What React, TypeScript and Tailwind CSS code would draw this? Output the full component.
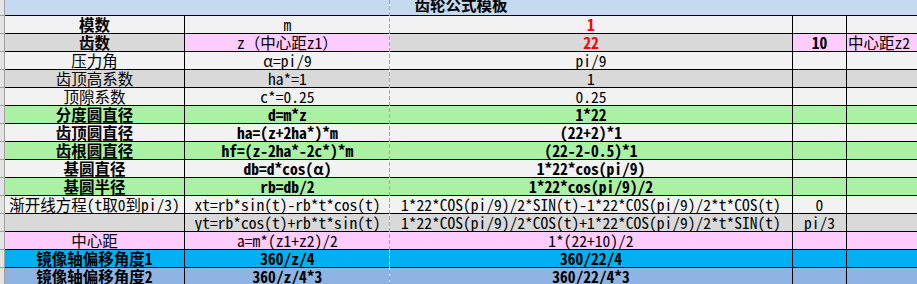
type Cell = { t: string; bg: string; b?: boolean; red?: boolean }

const G1 = "bg-[#f2f2f2]"
const G2 = "bg-[#d9d9d9]"
const PK = "bg-[#ffccff]"
const GR = "bg-[#aaf1a3]"
const BL = "bg-[#00b0f0]"
const LB = "bg-[#8db4e2]"

const c = (t: string, bg: string, b = false, red = false): Cell => ({ t, bg, b, red })

const rows: Cell[][] = [
  [c("模数", G1, true), c("m", G1), c("1", G1, true, true), c("", G1), c("", G1)],
  [c("齿数", G2, true), c("z（中心距z1）", PK), c("22", G2, true, true), c("10", PK, true), c("中心距z2", PK)],
  [c("压力角", G1), c("α=pi/9", G1), c("pi/9", G1), c("", G1), c("", G1)],
  [c("齿顶高系数", G2), c("ha*=1", G2), c("1", G2), c("", G2), c("", G2)],
  [c("顶隙系数", G1), c("c*=0.25", G1), c("0.25", G1), c("", G1), c("", G1)],
  [c("分度圆直径", GR, true), c("d=m*z", GR, true), c("1*22", GR, true), c("", GR), c("", GR)],
  [c("齿顶圆直径", G1, true), c("ha=(z+2ha*)*m", G1, true), c("(22+2)*1", G1, true), c("", G1), c("", G1)],
  [c("齿根圆直径", GR, true), c("hf=(z-2ha*-2c*)*m", GR, true), c("(22-2-0.5)*1", GR, true), c("", GR), c("", GR)],
  [c("基圆直径", G1, true), c("db=d*cos(α)", G1, true), c("1*22*cos(pi/9)", G1, true), c("", G1), c("", G1)],
  [c("基圆半径", GR, true), c("rb=db/2", GR, true), c("1*22*cos(pi/9)/2", GR, true), c("", GR), c("", GR)],
  [
    c("渐开线方程(t取0到pi/3)", G1),
    c("xt=rb*sin(t)-rb*t*cos(t)", G1),
    c("1*22*COS(pi/9)/2*SIN(t)-1*22*COS(pi/9)/2*t*COS(t)", G1),
    c("0", G1),
    c("", G1),
  ],
  [
    c("", G2),
    c("yt=rb*cos(t)+rb*t*sin(t)", G2),
    c("1*22*COS(pi/9)/2*COS(t)+1*22*COS(pi/9)/2*t*SIN(t)", G2),
    c("pi/3", G2),
    c("", G2),
  ],
  [c("中心距", PK), c("a=m*(z1+z2)/2", PK), c("1*(22+10)/2", PK), c("", PK), c("", PK)],
  [c("镜像轴偏移角度1", BL, true), c("360/z/4", BL, true), c("360/22/4", BL, true), c("", BL), c("", BL)],
  [c("镜像轴偏移角度2", LB, true), c("360/z/4*3", LB, true), c("360/22/4*3", LB, true), c("", LB), c("", LB)],
]

const widths = [
  "w-[180px] border-r justify-center",
  "w-[205px] justify-center",
  "w-[403px] border-r justify-center",
  "w-[54px] border-r justify-center",
  "flex-1 justify-start pl-[1px]",
]

export default function App() {
  return (
    <div className="relative w-[917px] h-[284px] overflow-hidden bg-white text-[15.5px] text-black font-['Noto_Sans_Mono_CJK_SC','Noto_Sans_CJK_SC',monospace]">
      <div className="flex h-[16px]">
        <div className="w-[5px] border-r border-b border-[#a0a0a0] bg-[#e4e4e4]" />
        <div className="flex flex-1 justify-center overflow-hidden border-b border-black bg-[#c5d9f1]">
          <span className="-mt-[5px] font-bold leading-[18px]">齿轮公式模板</span>
        </div>
      </div>

      {rows.map((row, i) => (
        <div key={i} className="flex h-[18px]">
          <div className="w-[5px] border-r border-b border-[#a0a0a0] bg-[#e4e4e4]" />
          {row.map((cell, j) => (
            <div
              key={j}
              className={`flex items-center overflow-visible whitespace-nowrap border-b border-black leading-[17px] ${widths[j]} ${cell.bg} ${cell.b ? "font-bold" : ""} ${cell.red ? "text-[#ff0000]" : ""}`}
            >
              {cell.t}
            </div>
          ))}
        </div>
      ))}

      <div className="absolute left-[389px] top-0 h-full w-px bg-[repeating-linear-gradient(to_bottom,#a3a3a3_0px,#a3a3a3_4px,#ffffff_4px,#ffffff_6px)]" />
    </div>
  )
}
